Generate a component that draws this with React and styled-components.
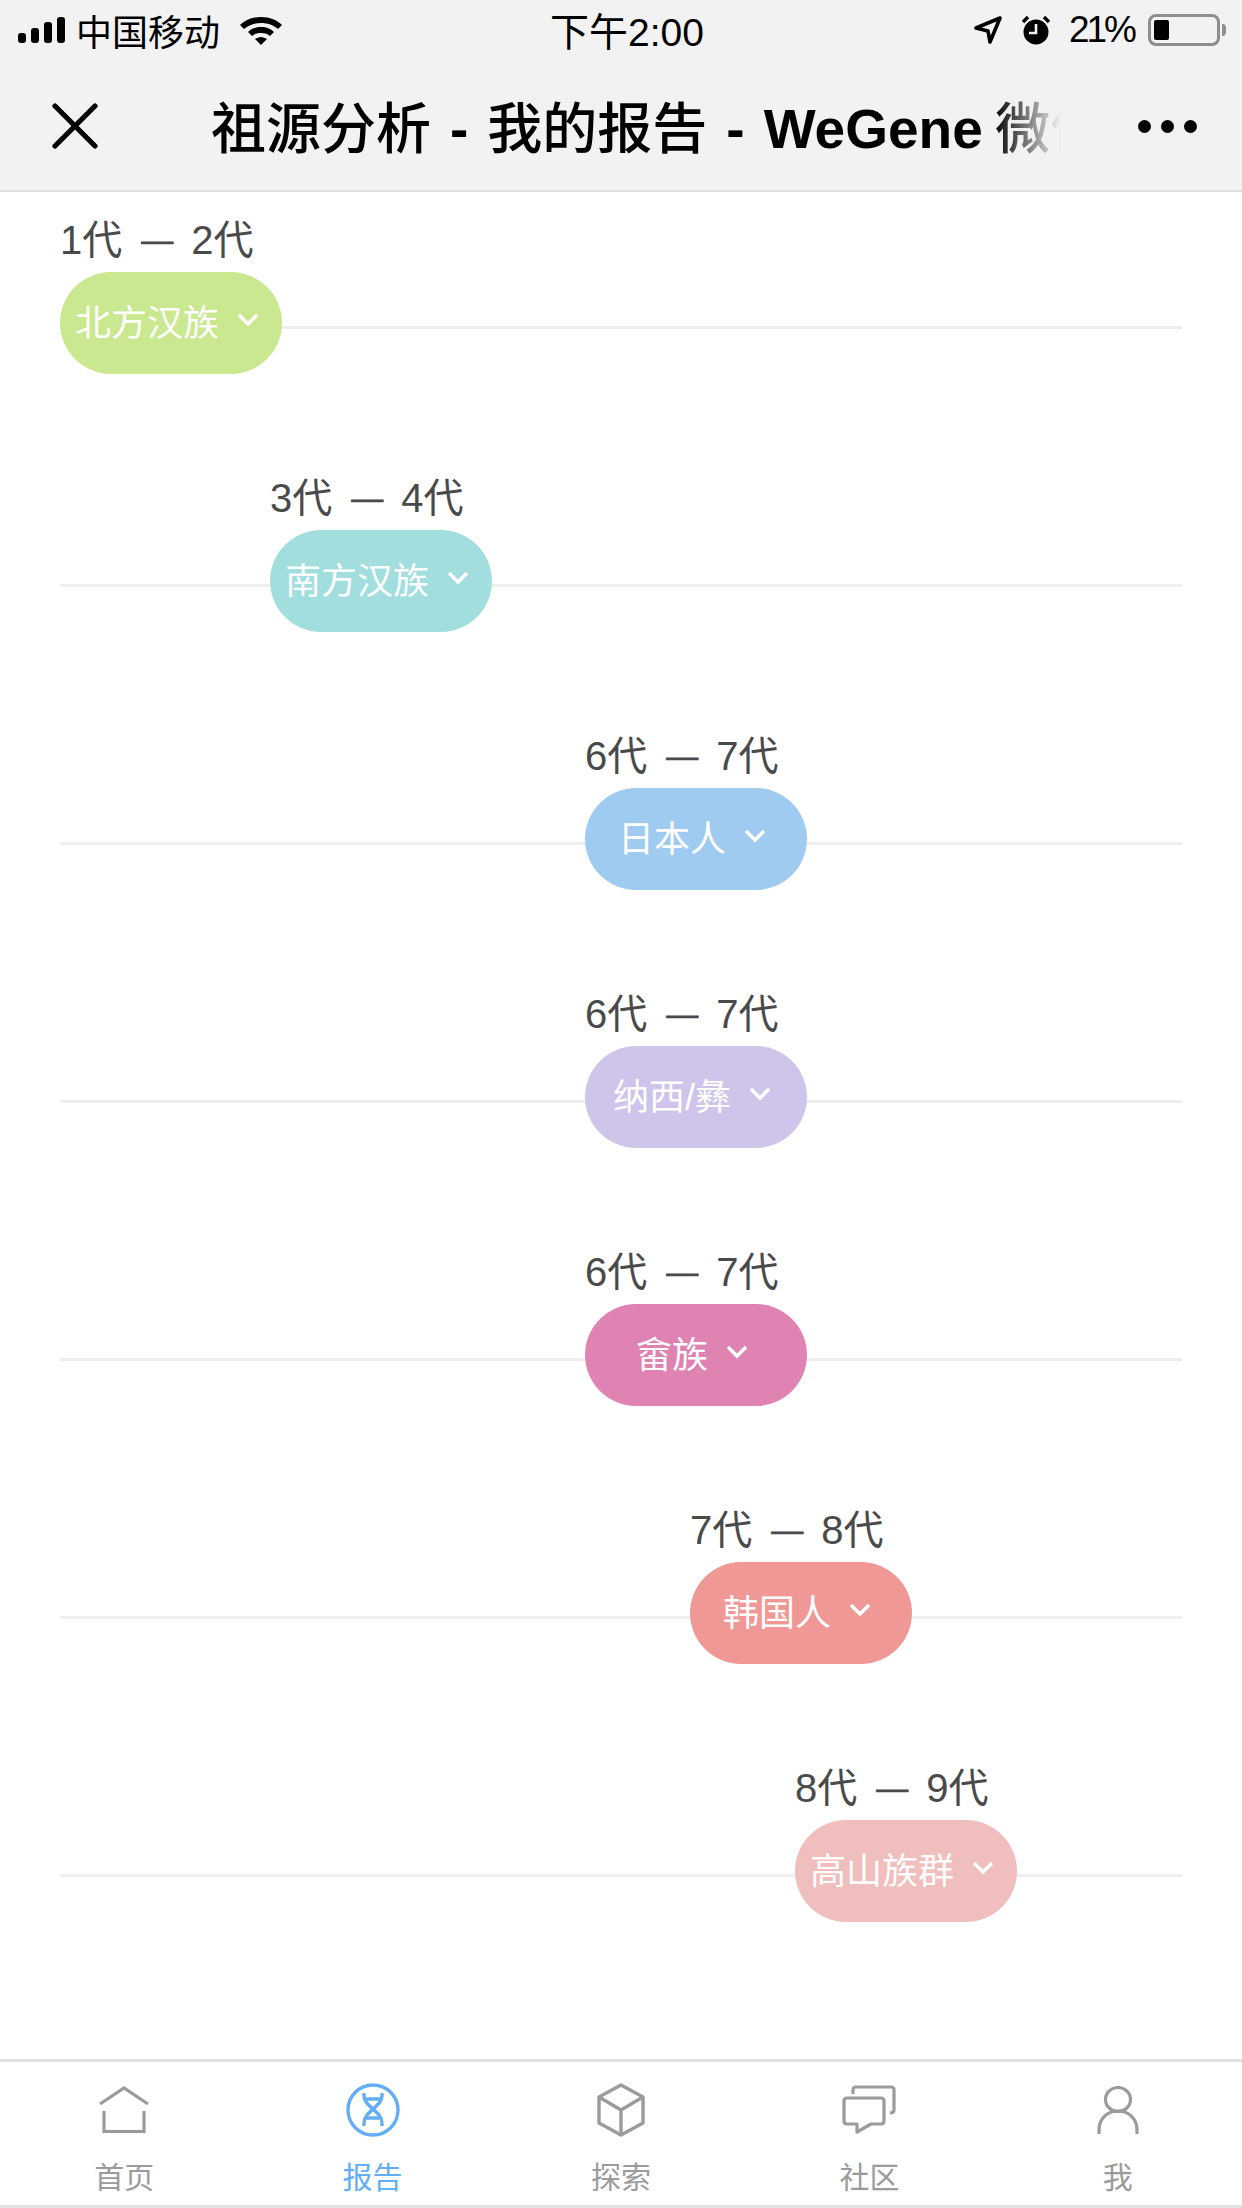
import React from "react";
import styled, { createGlobalStyle } from "styled-components";

const sans = `"Liberation Sans", "Noto Sans CJK SC", sans-serif`;

const rows = [
  { from: 1, to: 2, name: "北方汉族", offset: 0, color: "#c9e890" },
  { from: 3, to: 4, name: "南方汉族", offset: 210, color: "#a1dedd" },
  { from: 6, to: 7, name: "日本人", offset: 525, color: "#9fcbf0" },
  { from: 6, to: 7, name: "纳西/彝", offset: 525, color: "#cfc5ea" },
  { from: 6, to: 7, name: "畲族", offset: 525, color: "#df83b3" },
  { from: 7, to: 8, name: "韩国人", offset: 630, color: "#f09896" },
  { from: 8, to: 9, name: "高山族群", offset: 735, color: "#f0bebc" },
];

const GRAY = "#9b9b9b";
const BLUE = "#64aef5";

function HomeIcon() {
  return (
    <svg width="50" height="48" viewBox="0 0 50 48" fill="none" stroke={GRAY} strokeWidth="3.2">
      <path d="M1 18 L25 2 L49 18" />
      <path d="M5 25 V45.5 H45 V25" />
    </svg>
  );
}

function DnaIcon() {
  return (
    <svg width="54" height="54" viewBox="0 0 54 54" fill="none" stroke={BLUE} strokeWidth="3.4">
      <circle cx="27" cy="27" r="25" />
      <path d="M18 10 V13 C18 24 36 28 36 40 V43" />
      <path d="M36 10 V13 C36 24 18 28 18 40 V43" />
      <path d="M18 16 H36 M19 35 H35" />
    </svg>
  );
}

function CubeIcon() {
  return (
    <svg width="48" height="54" viewBox="0 0 48 54" fill="none" stroke={GRAY} strokeWidth="3.4" strokeLinejoin="round">
      <path d="M24 2 L46 14 V40 L24 52 L2 40 V14 Z" />
      <path d="M2 14 L24 27 L46 14 M24 27 V52" />
    </svg>
  );
}

function ChatIcon() {
  return (
    <svg width="54" height="50" viewBox="0 0 54 50" fill="none" stroke={GRAY} strokeWidth="3.2" strokeLinejoin="round">
      <path d="M11 9 V5 Q11 2 14 2 H49 Q52 2 52 5 V25 Q52 28 48 28" />
      <path d="M5 13 H39 Q42 13 42 16 V36 Q42 39 39 39 H29 L15 47 V39 H5 Q2 39 2 36 V16 Q2 13 5 13 Z" />
    </svg>
  );
}

function UserIcon() {
  return (
    <svg width="42" height="48" viewBox="0 0 42 48" fill="none" stroke={GRAY} strokeWidth="3.2">
      <ellipse cx="21" cy="13.5" rx="12.5" ry="12" />
      <path d="M2 48 V44 C2 33 10 25 21 25 C32 25 40 33 40 44 V48" />
    </svg>
  );
}

const tabs = [
  { label: "首页", icon: <HomeIcon /> },
  { label: "报告", icon: <DnaIcon />, active: true },
  { label: "探索", icon: <CubeIcon /> },
  { label: "社区", icon: <ChatIcon /> },
  { label: "我", icon: <UserIcon /> },
];

function App() {
  return (
    <Page>
      <GlobalStyle />
      <Header>
        <StatusBar>
          <StatusSide>
            <svg width="49" height="26" viewBox="0 0 49 26" fill="#000">
              <rect x="0" y="16" width="8" height="10" rx="3" />
              <rect x="13" y="11" width="8" height="15" rx="3" />
              <rect x="26" y="5" width="8" height="21" rx="3" />
              <rect x="39" y="0" width="8" height="26" rx="3" />
            </svg>
            <Carrier>中国移动</Carrier>
            <svg width="44" height="32" viewBox="0 0 44 32" fill="#000">
              <path d="M22 3 C13 3 6 6 1 11 L5 15 C10 11 15 9 22 9 C29 9 34 11 39 15 L43 11 C38 6 31 3 22 3 Z" />
              <path d="M22 13 C16 13 12 15 9 18 L13 22 C15 20 18 19 22 19 C26 19 29 20 31 22 L35 18 C32 15 28 13 22 13 Z" />
              <path d="M22 23 C20 23 18 24 16 25 L22 31 L28 25 C26 24 24 23 22 23 Z" />
            </svg>
          </StatusSide>
          <Clock>下午2:00</Clock>
          <StatusSide>
            <svg width="30" height="30" viewBox="0 0 30 30" fill="none" stroke="#000" strokeWidth="3.6" strokeLinejoin="round">
              <path d="M27 3 L3 13 L15 16 L17 27 Z" />
            </svg>
            <svg width="30" height="32" viewBox="0 0 30 32" fill="#000" style={{ marginLeft: 18 }}>
              <circle cx="15" cy="18" r="12.5" />
              <path d="M2 8 L7 3 M28 8 L23 3" stroke="#000" strokeWidth="3.4" />
              <path d="M15 10 V19 H8" stroke="#f2f2f2" strokeWidth="2.6" fill="none" />
            </svg>
            <Percent>21%</Percent>
            <Battery>
              <BatteryFill />
            </Battery>
            <BatteryCap />
          </StatusSide>
        </StatusBar>
        <NavBar>
          <svg width="46" height="46" viewBox="0 0 46 46" stroke="#000" strokeWidth="5.2" strokeLinecap="round">
            <path d="M3 3 L43 43 M43 3 L3 43" />
          </svg>
          <Title>
            祖源分析<Sep>-</Sep>我的报告<Sep>-</Sep>
            <Latin>WeGene</Latin> 微信小程序
          </Title>
          <MoreDots>
            <i />
            <i />
            <i />
          </MoreDots>
        </NavBar>
      </Header>

      <Timeline>
        {rows.map((r) => (
          <Row key={r.name}>
            <Marker $offset={r.offset}>
              <Range>
                {r.from}代<Dash>—</Dash>
                {r.to}代
              </Range>
              <Pill $color={r.color}>
                {r.name}
                <svg width="20" height="14" viewBox="0 0 20 14" fill="none" stroke="#fff" strokeWidth="3.4">
                  <path d="M1 2 L10 11 L19 2" />
                </svg>
              </Pill>
            </Marker>
          </Row>
        ))}
      </Timeline>

      <TabBar>
        {tabs.map((t) => (
          <Tab key={t.label} $active={t.active}>
            <TabIcon>{t.icon}</TabIcon>
            {t.label}
          </Tab>
        ))}
      </TabBar>
    </Page>
  );
}

const GlobalStyle = createGlobalStyle`
  body {
    margin: 0;
    background: #fff;
    font-family: ${sans};
  }
`;

const Page = styled.div`
  width: 1242px;
  height: 2208px;
  display: flex;
  flex-direction: column;
  overflow: hidden;
`;

const Header = styled.header`
  height: 192px;
  flex: none;
  background: #f2f2f2;
  border-bottom: 2px solid #dedede;
  box-sizing: border-box;
`;

const StatusBar = styled.div`
  height: 60px;
  padding: 0 16px 0 18px;
  display: flex;
  align-items: center;
  justify-content: space-between;
  position: relative;
`;

const StatusSide = styled.div`
  display: flex;
  align-items: center;
`;

const Carrier = styled.span`
  font-size: 36px;
  margin: 0 19px 0 9px;
`;

const Clock = styled.span`
  position: absolute;
  left: 550px;
  top: 1px;
  font-size: 39px;
`;

const Percent = styled.span`
  font-size: 37px;
  letter-spacing: -3px;
  margin: 0 14px 0 18px;
`;

const Battery = styled.div`
  width: 72px;
  height: 32px;
  border: 3px solid #8e8e8e;
  border-radius: 8px;
  padding: 3px;
  box-sizing: border-box;
  display: flex;
`;

const BatteryFill = styled.div`
  width: 15px;
  background: #000;
  border-radius: 2px;
`;

const BatteryCap = styled.div`
  width: 4px;
  height: 12px;
  margin-left: 2px;
  background: #8e8e8e;
  border-radius: 0 4px 4px 0;
`;

const NavBar = styled.div`
  height: 130px;
  padding: 2px 45px 0 52px;
  box-sizing: border-box;
  display: flex;
  align-items: center;
  position: relative;
`;

const Title = styled.h1`
  width: 850px;
  margin: 0 0 0 113px;
  font-family: "Noto Sans CJK SC", sans-serif;
  font-size: 55px;
  font-weight: 500;
  line-height: 70px;
  white-space: nowrap;
  overflow: hidden;
  -webkit-mask-image: linear-gradient(to right, #000 92%, transparent 100%);
  mask-image: linear-gradient(to right, #000 92%, transparent 100%);
`;

const Latin = styled.span`
  font-family: "Liberation Sans", sans-serif;
  font-weight: 700;
`;

const Sep = styled(Latin)`
  margin: 0 19px;
`;

const MoreDots = styled.div`
  margin-left: auto;
  display: flex;
  gap: 10px;

  i {
    width: 13px;
    height: 13px;
    border-radius: 50%;
    background: #000;
  }
`;

const Timeline = styled.main`
  flex: 1;
  padding: 0 60px;
`;

const Row = styled.section`
  height: 258px;
  position: relative;

  &::before {
    content: "";
    position: absolute;
    left: 0;
    right: 0;
    top: 134px;
    height: 3px;
    background: #eeeeee;
  }
`;

const Marker = styled.div`
  position: relative;
  width: 222px;
  margin-left: ${(p) => p.$offset}px;
`;

const Range = styled.div`
  height: 80px;
  padding-top: 20px;
  box-sizing: border-box;
  font-size: 40px;
  line-height: 56px;
  color: #4a4a4a;
  white-space: nowrap;
`;

const Dash = styled.span`
  font-size: 32px;
  -webkit-text-stroke: 0.6px #4a4a4a;
  margin: 0 18px 0 19px;
  vertical-align: 3px;
`;

const Pill = styled.div`
  height: 102px;
  border-radius: 51px;
  background: ${(p) => p.$color};
  color: #fff;
  font-size: 36px;
  display: flex;
  align-items: center;
  justify-content: center;
  gap: 19px;
  padding: 0 9px 6px 0;
  box-sizing: border-box;
`;

const TabBar = styled.nav`
  height: 149px;
  flex: none;
  display: grid;
  grid-template-columns: repeat(5, 1fr);
  border-top: 3px solid #e2e2e4;
  border-bottom: 3px solid #e2e2e4;
  box-sizing: border-box;
`;

const Tab = styled.div`
  display: flex;
  flex-direction: column;
  align-items: center;
  font-size: 30px;
  line-height: 36px;
  color: ${(p) => (p.$active ? BLUE : GRAY)};
`;

const TabIcon = styled.div`
  height: 62px;
  margin: 17px 0 19px;
  display: flex;
  align-items: center;
`;

export default App;
